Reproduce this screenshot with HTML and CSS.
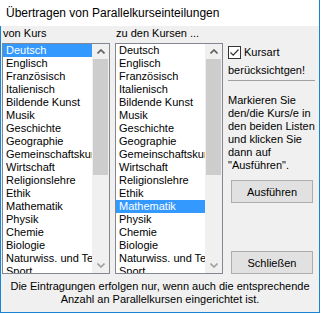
FILE: index.html
```html
<!DOCTYPE html>
<html lang="de">
<head>
  <meta charset="UTF-8">
  <title>Übertragen von Parallelkurseinteilungen</title>
  <link rel="stylesheet" href="styles.css">
</head>
<body>

  <div class="window">
    <!-- Titelleiste -->
    <div class="titlebar">Übertragen von Parallelkurseinteilungen</div>

    <div class="client">
      <div class="main">

        <!-- von Kurs -->
        <div class="col">
          <div class="label">von Kurs</div>
          <div class="listbox">
            <div class="items">
              <div class="item sel">Deutsch</div>
              <div class="item">Englisch</div>
              <div class="item">Französisch</div>
              <div class="item">Italienisch</div>
              <div class="item">Bildende Kunst</div>
              <div class="item">Musik</div>
              <div class="item">Geschichte</div>
              <div class="item">Geographie</div>
              <div class="item">Gemeinschaftskunde</div>
              <div class="item">Wirtschaft</div>
              <div class="item">Religionslehre</div>
              <div class="item">Ethik</div>
              <div class="item">Mathematik</div>
              <div class="item">Physik</div>
              <div class="item">Chemie</div>
              <div class="item">Biologie</div>
              <div class="item">Naturwiss. und Technik</div>
              <div class="item">Sport</div>
            </div>
            <div class="scroll">
              <div class="arrow"><svg width="8" height="5"><polyline points="0.5,4.5 4,1 7.5,4.5" fill="none" stroke="#606060" stroke-width="1.6"/></svg></div>
              <div class="thumb"></div>
              <div class="track"></div>
              <div class="arrow down"><svg width="8" height="5"><polyline points="0.5,0.5 4,4 7.5,0.5" fill="none" stroke="#a0a0a0" stroke-width="1.6"/></svg></div>
            </div>
          </div>
        </div>

        <!-- zu den Kursen -->
        <div class="col">
          <div class="label">zu den Kursen ...</div>
          <div class="listbox">
            <div class="items">
              <div class="item">Deutsch</div>
              <div class="item">Englisch</div>
              <div class="item">Französisch</div>
              <div class="item">Italienisch</div>
              <div class="item">Bildende Kunst</div>
              <div class="item">Musik</div>
              <div class="item">Geschichte</div>
              <div class="item">Geographie</div>
              <div class="item">Gemeinschaftskunde</div>
              <div class="item">Wirtschaft</div>
              <div class="item">Religionslehre</div>
              <div class="item">Ethik</div>
              <div class="item sel">Mathematik</div>
              <div class="item">Physik</div>
              <div class="item">Chemie</div>
              <div class="item">Biologie</div>
              <div class="item">Naturwiss. und Technik</div>
              <div class="item">Sport</div>
            </div>
            <div class="scroll">
              <div class="arrow"><svg width="8" height="5"><polyline points="0.5,4.5 4,1 7.5,4.5" fill="none" stroke="#606060" stroke-width="1.6"/></svg></div>
              <div class="thumb"></div>
              <div class="track"></div>
              <div class="arrow down"><svg width="8" height="5"><polyline points="0.5,0.5 4,4 7.5,0.5" fill="none" stroke="#a0a0a0" stroke-width="1.6"/></svg></div>
            </div>
          </div>
        </div>

        <!-- Optionen -->
        <div class="side">
          <div class="check">
            <span class="box"><svg width="11" height="11"><polyline points="1.5,5.5 4.2,8.2 9.5,2.5" fill="none" stroke="#333" stroke-width="1.2"/></svg></span>
            Kursart
          </div>
          <div class="subnote">berücksichtgen!</div>
          <div class="sep"></div>
          <p class="hint">Markieren Sie<br>den/die Kurs/e in<br>den beiden Listen<br>und klicken Sie<br>dann auf<br>"Ausführen".</p>
          <button class="btn run">Ausführen</button>
          <button class="btn close">Schließen</button>
        </div>

      </div>

      <p class="footer">Die Eintragungen erfolgen nur, wenn auch die entsprechende<br>Anzahl an Parallelkursen eingerichtet ist.</p>
    </div>
  </div>

</body>
</html>
```

FILE: styles.css
```css
body {
  margin: 0;
  background: #fff;
  color: #000;
  font-family: 'Liberation Sans', Arial, sans-serif;
  font-size: 11px;
}

.window {
  width: 320px;
  height: 313px;
  box-sizing: border-box;
  border-right: 1px solid #1883d7;
  border-bottom: 1px solid #1883d7;
  background: #f0f0f0;
  display: flex;
  flex-direction: column;
}

.titlebar {
  height: 26px;
  line-height: 26px;
  padding-left: 6px;
  background: #fff;
  font-size: 12px;
}

.client {
  flex: 1;
  border-left: 1px solid #1883d7;
  display: flex;
  flex-direction: column;
}

.main {
  display: flex;
  padding: 1px 0 0 1px;
}

.col {
  width: 108px;
}

.col + .col {
  margin-left: 5px;
}

.label {
  height: 13px;
  line-height: 13px;
  padding-left: 1px;
  margin-bottom: 3px;
  white-space: nowrap;
}

.listbox {
  height: 231px;
  box-sizing: border-box;
  border: 1px solid #828790;
  background: #fff;
  display: flex;
}

.items {
  width: 89px;
  overflow: hidden;
}

.item {
  height: 13px;
  line-height: 13px;
  padding-left: 3px;
  white-space: nowrap;
}

.item.sel {
  background: #3399ff;
  color: #fff;
}

.scroll {
  width: 17px;
  background: #f0f0f0;
  display: flex;
  flex-direction: column;
}

.arrow {
  height: 15px;
  display: flex;
  align-items: center;
  justify-content: center;
}

.thumb {
  height: 116px;
  margin: 0 1px;
  background: #cdcdcd;
}

.track {
  flex: 1;
}

.side {
  width: 91px;
  margin-left: 5px;
}

.check {
  margin-top: 19px;
  height: 13px;
  line-height: 13px;
  display: flex;
  align-items: center;
}

.box {
  width: 13px;
  height: 13px;
  box-sizing: border-box;
  border: 1px solid #333;
  background: #fff;
  margin-right: 3px;
  display: flex;
}

.subnote {
  margin-top: 5px;
  line-height: 13px;
}

.sep {
  width: 87px;
  margin-top: 3px;
  border-top: 1px solid #a0a0a0;
}

.hint {
  margin: 13px 0 0;
  line-height: 13px;
  white-space: nowrap;
}

.btn {
  display: block;
  width: 82px;
  height: 23px;
  margin-left: 3px;
  padding: 0;
  box-sizing: border-box;
  border: 1px solid #adadad;
  background: #e1e1e1;
  font: inherit;
  color: #000;
  text-align: center;
}

.btn.run {
  margin-top: 8px;
}

.btn.close {
  margin-top: 48px;
}

.footer {
  margin: 6px 0 0;
  line-height: 13px;
  text-align: center;
  white-space: nowrap;
}
```
